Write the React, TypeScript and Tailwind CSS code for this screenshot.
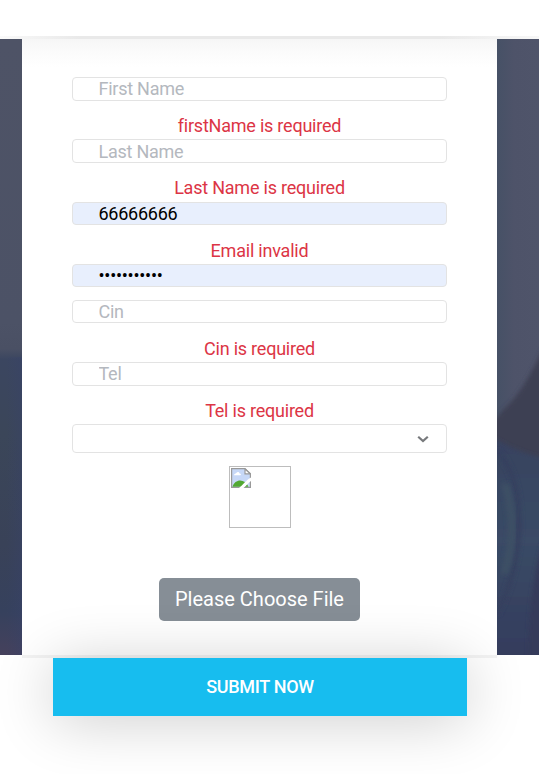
import React from 'react';

type FieldProps = {
  placeholder?: string;
  value?: string;
  type?: string;
  error?: string;
  box: string;
};

function Field({ placeholder, value, type = 'text', error, box }: FieldProps) {
  return (
    <div className="flex flex-col">
      <input
        type={type}
        placeholder={placeholder}
        defaultValue={value}
        className={`block w-full rounded-[4px] border border-[#e3e3e3] pl-[25.5px] text-[18px] leading-[21px] tracking-[-0.25px] text-black outline-none placeholder:text-[#b4b8be] ${box}`}
      />
      {error && (
        <p className="h-[27px] text-center text-[18px] leading-[27px] tracking-[-0.22px] text-[#dc3545]">{error}</p>
      )}
    </div>
  );
}

function LeftBackdrop() {
  return (
    <svg className="h-full w-[22px] shrink-0" viewBox="0 0 22 616" preserveAspectRatio="none">
      <defs>
        <linearGradient id="left-wall" x1="0" y1="0" x2="0" y2="1">
          <stop offset="0" stopColor="#4e5366" />
          <stop offset="0.46" stopColor="#4c5266" />
          <stop offset="0.503" stopColor="#4a5064" />
          <stop offset="0.52" stopColor="#3b4660" />
          <stop offset="0.64" stopColor="#3b4659" />
          <stop offset="0.82" stopColor="#394258" />
          <stop offset="0.93" stopColor="#36415d" />
          <stop offset="1" stopColor="#45415c" />
        </linearGradient>
        <linearGradient id="left-side" x1="0" x2="1">
          <stop offset="0.3" stopColor="#38426a" stopOpacity="0" />
          <stop offset="1" stopColor="#38426a" stopOpacity="0.4" />
        </linearGradient>
      </defs>
      <rect width="22" height="616" fill="url(#left-wall)" />
      <rect y="318" width="22" height="298" fill="url(#left-side)" />
    </svg>
  );
}

function RightBackdrop() {
  return (
    <svg className="h-full w-[42px] shrink-0" viewBox="0 0 42 616">
      <defs>
        <linearGradient id="right-wall" x1="0" x2="1">
          <stop offset="0" stopColor="#465166" />
          <stop offset="0.4" stopColor="#4e5369" />
          <stop offset="1" stopColor="#4f546a" />
        </linearGradient>
        <linearGradient id="right-cloth" x1="0" y1="0" x2="0" y2="1">
          <stop offset="0" stopColor="#37425f" />
          <stop offset="0.45" stopColor="#3a4b66" />
          <stop offset="0.78" stopColor="#364160" />
          <stop offset="1" stopColor="#363b5b" />
        </linearGradient>
        <filter id="soften" x="-50%" y="-20%" width="200%" height="140%">
          <feGaussianBlur stdDeviation="2" />
        </filter>
      </defs>
      <rect width="42" height="616" fill="url(#right-wall)" />
      <path d="M-10 386Q0 380 6 371Q28 352 50 300V630H-10Z" fill="#3d3f52" filter="url(#soften)" />
      <path d="M-8 396Q18 413 50 420V630H-8Z" fill="url(#right-cloth)" filter="url(#soften)" />
      <path d="M0 412Q23 435 22 490Q20 535 0 575" fill="none" stroke="#36405f" strokeWidth="5" filter="url(#soften)" />
      <path d="M50 490Q31 540 31 630H50Z" fill="#363b5a" filter="url(#soften)" />
      <path d="M8 445Q22 490 7 535" fill="none" stroke="#3c4f65" strokeWidth="8" filter="url(#soften)" />
    </svg>
  );
}

function BrokenImage() {
  return (
    <div className="mx-auto mt-[13px] h-[62px] w-[62px] border border-[#bdbdbd] p-px">
      <svg width="20" height="20" viewBox="0 0 20 20">
        <path d="M.6.6H14l5.4 5.2v13.6H.6Z" fill="#c7d8f7" stroke="#999" strokeWidth="1.2" />
        <path d="M1.5 18.8C4 10.5 14 10.5 17.5 18.8Z" fill="#51a832" />
        <path d="M3 7.3c0-1.7 2.2-1.8 2.5-2.5.9-1.5 3-.9 3 .8 1.7-.1 1.8 1.7.7 1.7Z" fill="#fff" />
        <path d="M14 1v4.8h5.3Z" fill="#fff" stroke="#999" strokeWidth="1.2" />
        <path d="M8 20C12 17 15 12 20 9.5V13C17 14.5 16 17.5 12.5 20Z" fill="#fff" />
      </svg>
    </div>
  );
}

export default function App() {
  return (
    <div className="h-[774px] w-full overflow-hidden bg-white font-[Roboto,sans-serif]">
      <header className="h-9 bg-white" />
      <div className="h-[3px] bg-[linear-gradient(90deg,#fafafa_0,#f3f3f3_30px,#e9e9e9_80px,#e9e9e9_440px,#f2f2f2_500px,#f7f7f7_539px)]" />
      <main className="flex h-[616px]">
        <LeftBackdrop />
        <section className="min-w-0 flex-1 bg-[linear-gradient(180deg,#f6f6f6_0,#fbfbfb_13px,#fff_28px)] px-[50px] pt-[38px]">
          <form className="flex flex-col">
            <Field box="h-6 bg-white mb-[11px] pb-[2px]" placeholder="First Name" error="firstName is required" />
            <Field box="h-6 bg-white mb-[11px]" placeholder="Last Name" error="Last Name is required" />
            <div className="h-px" />
            <Field box="h-[23px] bg-[#e8effd] mb-3" value="66666666" error="Email invalid" />
            <Field box="h-[23px] bg-[#e8effd] mb-[13px]" type="password" value="66666666666" />
            <Field box="h-[23px] bg-white mb-3" placeholder="Cin" error="Cin is required" />
            <Field box="h-6 bg-white mb-[11px] pb-[2px]" placeholder="Tel" error="Tel is required" />
            <div className="flex h-[29px] items-center justify-end rounded-[4px] border border-[#e3e3e3] bg-white pr-[17px]">
              <svg width="12" height="8" viewBox="0 0 12 8" fill="none">
                <path d="M1.2 1.7 6 6l4.8-4.3" stroke="#77797c" strokeWidth="2.2" />
              </svg>
            </div>
            <BrokenImage />
            <button type="button" className="mx-auto mt-[50px] h-[43px] w-[201px] rounded-[5px] bg-[#868e96] pb-[2px] text-[20px] text-white">
              Please Choose File
            </button>
          </form>
        </section>
        <RightBackdrop />
      </main>
      <footer className="bg-[linear-gradient(180deg,#f3f3f3_0,#f3f3f3_3px,#fff_3px)] bg-[length:475px_100%] bg-[position:22px_0] bg-no-repeat pt-[3px] pr-[72px] pl-[53px]">
        <button type="button" className="relative h-[58px] w-full bg-[#17bdef] pb-[2px] text-[18px] font-medium tracking-[-0.3px] text-white">
          SUBMIT NOW
          {/* Glow around the button, clipped so that it leaves the photo strips clean. */}
          <span className="pointer-events-none absolute inset-0 shadow-[0_5px_60px_rgba(0,0,0,0.2)] [clip-path:polygon(-31px_-80px,444px_-80px,444px_-3px,486px_-3px,486px_116px,-53px_116px,-53px_-3px,-31px_-3px)]" />
        </button>
      </footer>
    </div>
  );
}
